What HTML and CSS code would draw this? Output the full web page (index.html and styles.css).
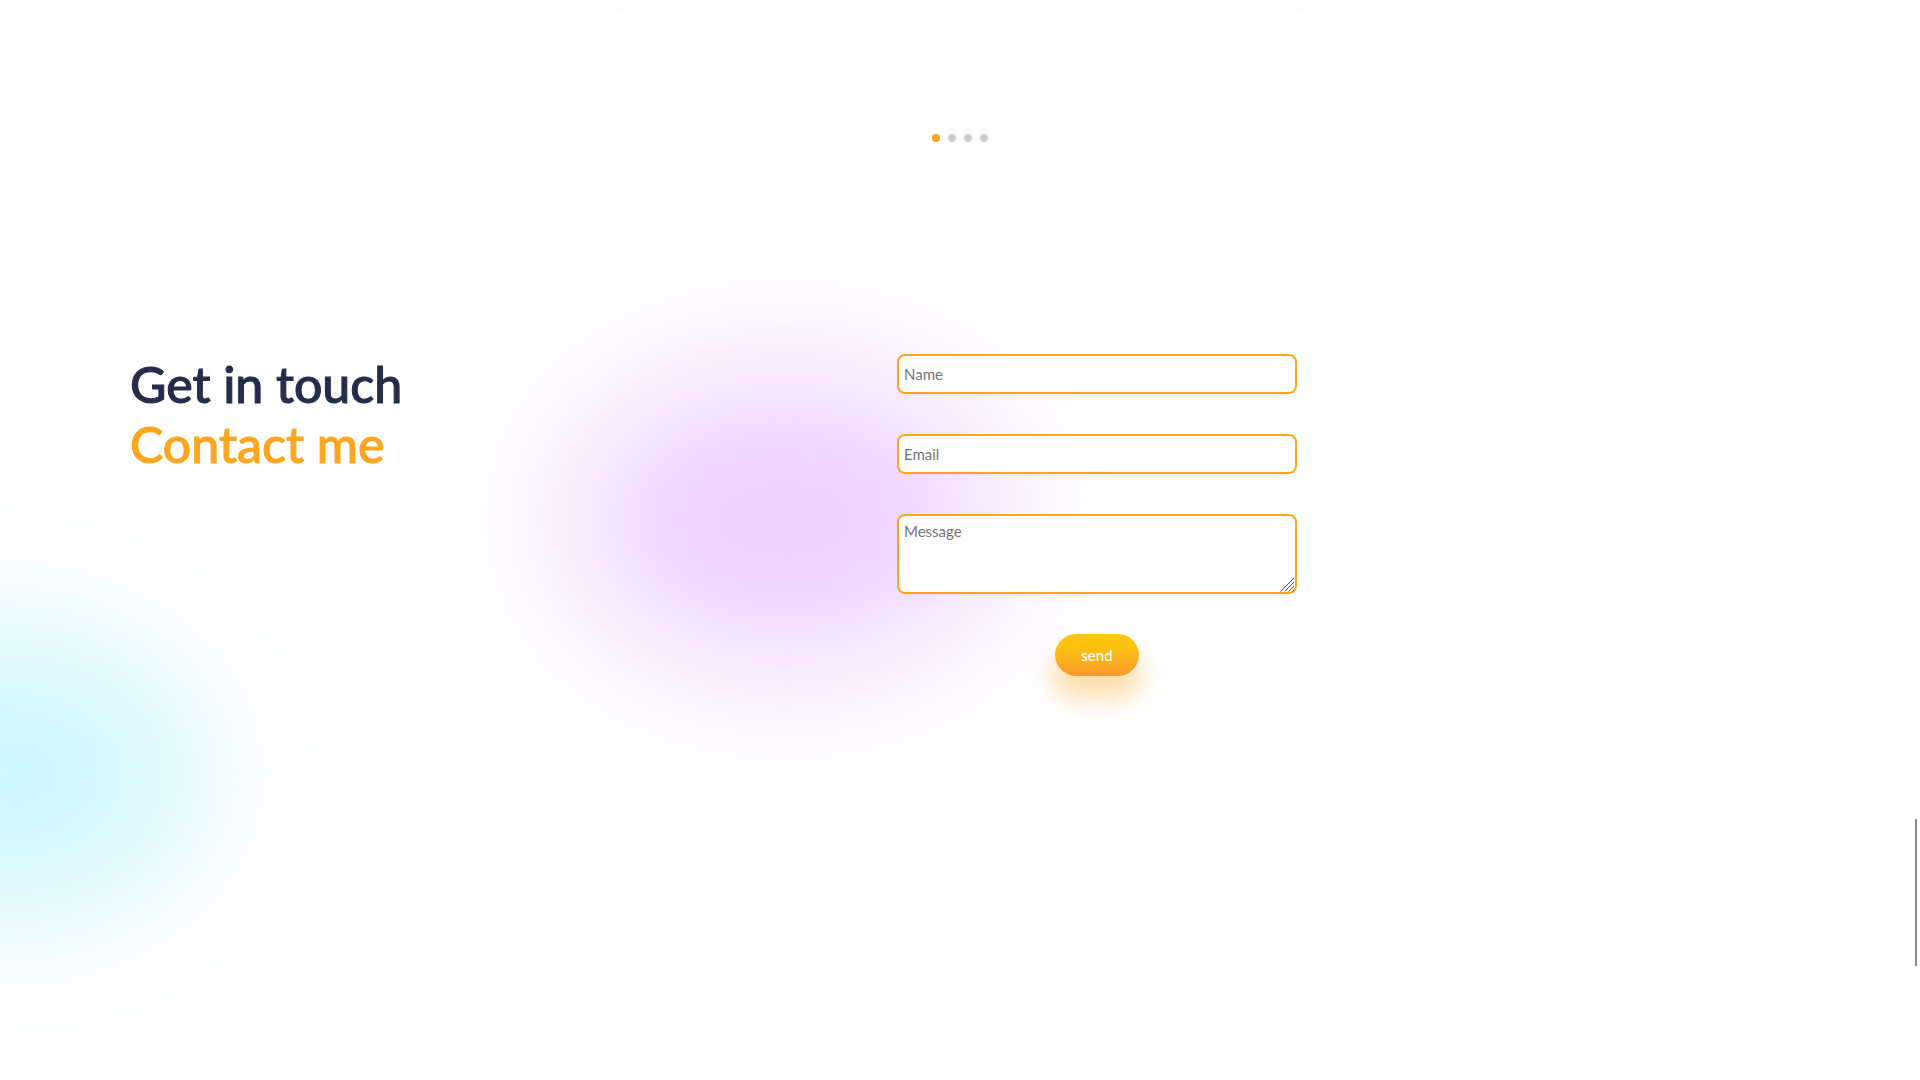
FILE: index.html
```html
<!DOCTYPE html>
<html lang="en">
<head>
<meta charset="utf-8">
<meta name="viewport" content="width=device-width, initial-scale=1">
<title>Contact</title>
<link rel="stylesheet" href="styles.css">
</head>
<body>
<main class="page">
  <div class="slider-shade"></div>
  <nav class="pagination" aria-label="Slides">
    <button type="button" class="bullet bullet-active" aria-label="Slide 1"></button>
    <button type="button" class="bullet" aria-label="Slide 2"></button>
    <button type="button" class="bullet" aria-label="Slide 3"></button>
    <button type="button" class="bullet" aria-label="Slide 4"></button>
  </nav>
  <section class="contact">
    <div class="blur blur-purple"></div>
    <div class="blur blur-cyan"></div>
    <h2 class="heading">Get in touch <span class="heading-accent">Contact me</span></h2>
    <form class="form">
      <input class="field" type="text" name="name" placeholder="Name" aria-label="Name">
      <input class="field" type="email" name="email" placeholder="Email" aria-label="Email">
      <div class="message">
        <textarea class="field field-message" name="message" placeholder="Message" aria-label="Message"></textarea>
        <svg class="grip" viewBox="0 0 15 15" aria-hidden="true"><path d="M0.5 14.5L14 1M4.5 14.5L14 5M8.5 14.5L14 9M12.5 14.5L14 13"/></svg>
      </div>
      <button class="send" type="submit">send</button>
    </form>
  </section>
</main>
<div class="scroll-thumb"></div>
</body>
</html>
```
FILE: styles.css
```css
* {
  box-sizing: border-box;
}

body {
  margin: 0;
  background: #fff;
  color: #242d49;
  font-family: Lato, "Open Sans", sans-serif;
}

.page {
  position: relative;
  z-index: 0;
  min-height: 100vh;
  padding-top: 134px;
  overflow: hidden;
}

/* Tail of the slider card's shadow above the pagination */
.slider-shade {
  position: absolute;
  top: -64px;
  left: 31%;
  right: 31%;
  height: 80px;
  border-radius: 40px;
  background: #fdfdfd;
  z-index: -1;
}

.pagination {
  display: flex;
  justify-content: center;
  gap: 8px;
}

.bullet {
  width: 8px;
  height: 8px;
  padding: 0;
  border: 0;
  border-radius: 50%;
  background: #ccc;
}

.bullet-active {
  background: #fca61f;
}

.contact {
  position: relative;
  display: grid;
  grid-template-columns: calc(50% - 63px) 400px;
  align-items: start;
  margin-top: 212px;
  padding: 0 130px;
}

.heading {
  margin: 0;
  font-size: 50px;
  line-height: 60px;
  font-weight: 500;
  -webkit-text-stroke: 1px currentColor;
}

.heading-accent {
  display: block;
  color: #fca61f;
}

.form {
  display: flex;
  flex-direction: column;
  align-items: center;
  gap: 40px;
}

.field {
  display: block;
  width: 100%;
  height: 40px;
  padding: 5px;
  border: 2px solid #fca61f;
  border-radius: 8px;
  background: #fff;
  color: #242d49;
  font-family: inherit;
  font-size: 15px;
  line-height: 20px;
}

.field::placeholder {
  color: #757575;
}

.message {
  position: relative;
  width: 100%;
}

.field-message {
  height: 80px;
  resize: none;
}

.grip {
  position: absolute;
  right: 2px;
  bottom: 2px;
  width: 15px;
  height: 15px;
  fill: none;
  stroke: #555;
  stroke-width: 1;
  pointer-events: none;
}

.send {
  height: 42px;
  padding: 0 26px;
  border: 0;
  border-radius: 21px;
  background: linear-gradient(180deg, #fdc50f 27%, #fb982f 105%);
  box-shadow: 0 20px 24px 3px rgba(251, 166, 31, 0.36);
  color: #fff;
  font-family: inherit;
  font-size: 15px;
  font-weight: 500;
}

.blur {
  position: absolute;
  border-radius: 50%;
  filter: blur(72px);
  z-index: -1;
}

.blur-purple {
  top: 20px;
  left: 570px;
  width: 430px;
  height: 290px;
  background: #edd0ff;
}

.blur-cyan {
  top: 280px;
  left: -200px;
  width: 400px;
  height: 280px;
  background: #cbf6ff;
}

.contact {
  margin-top: 212px;
}

.scroll-thumb {
  position: fixed;
  top: 819px;
  right: 3px;
  width: 2px;
  height: 147px;
  background: #8b8b8b;
}
```
